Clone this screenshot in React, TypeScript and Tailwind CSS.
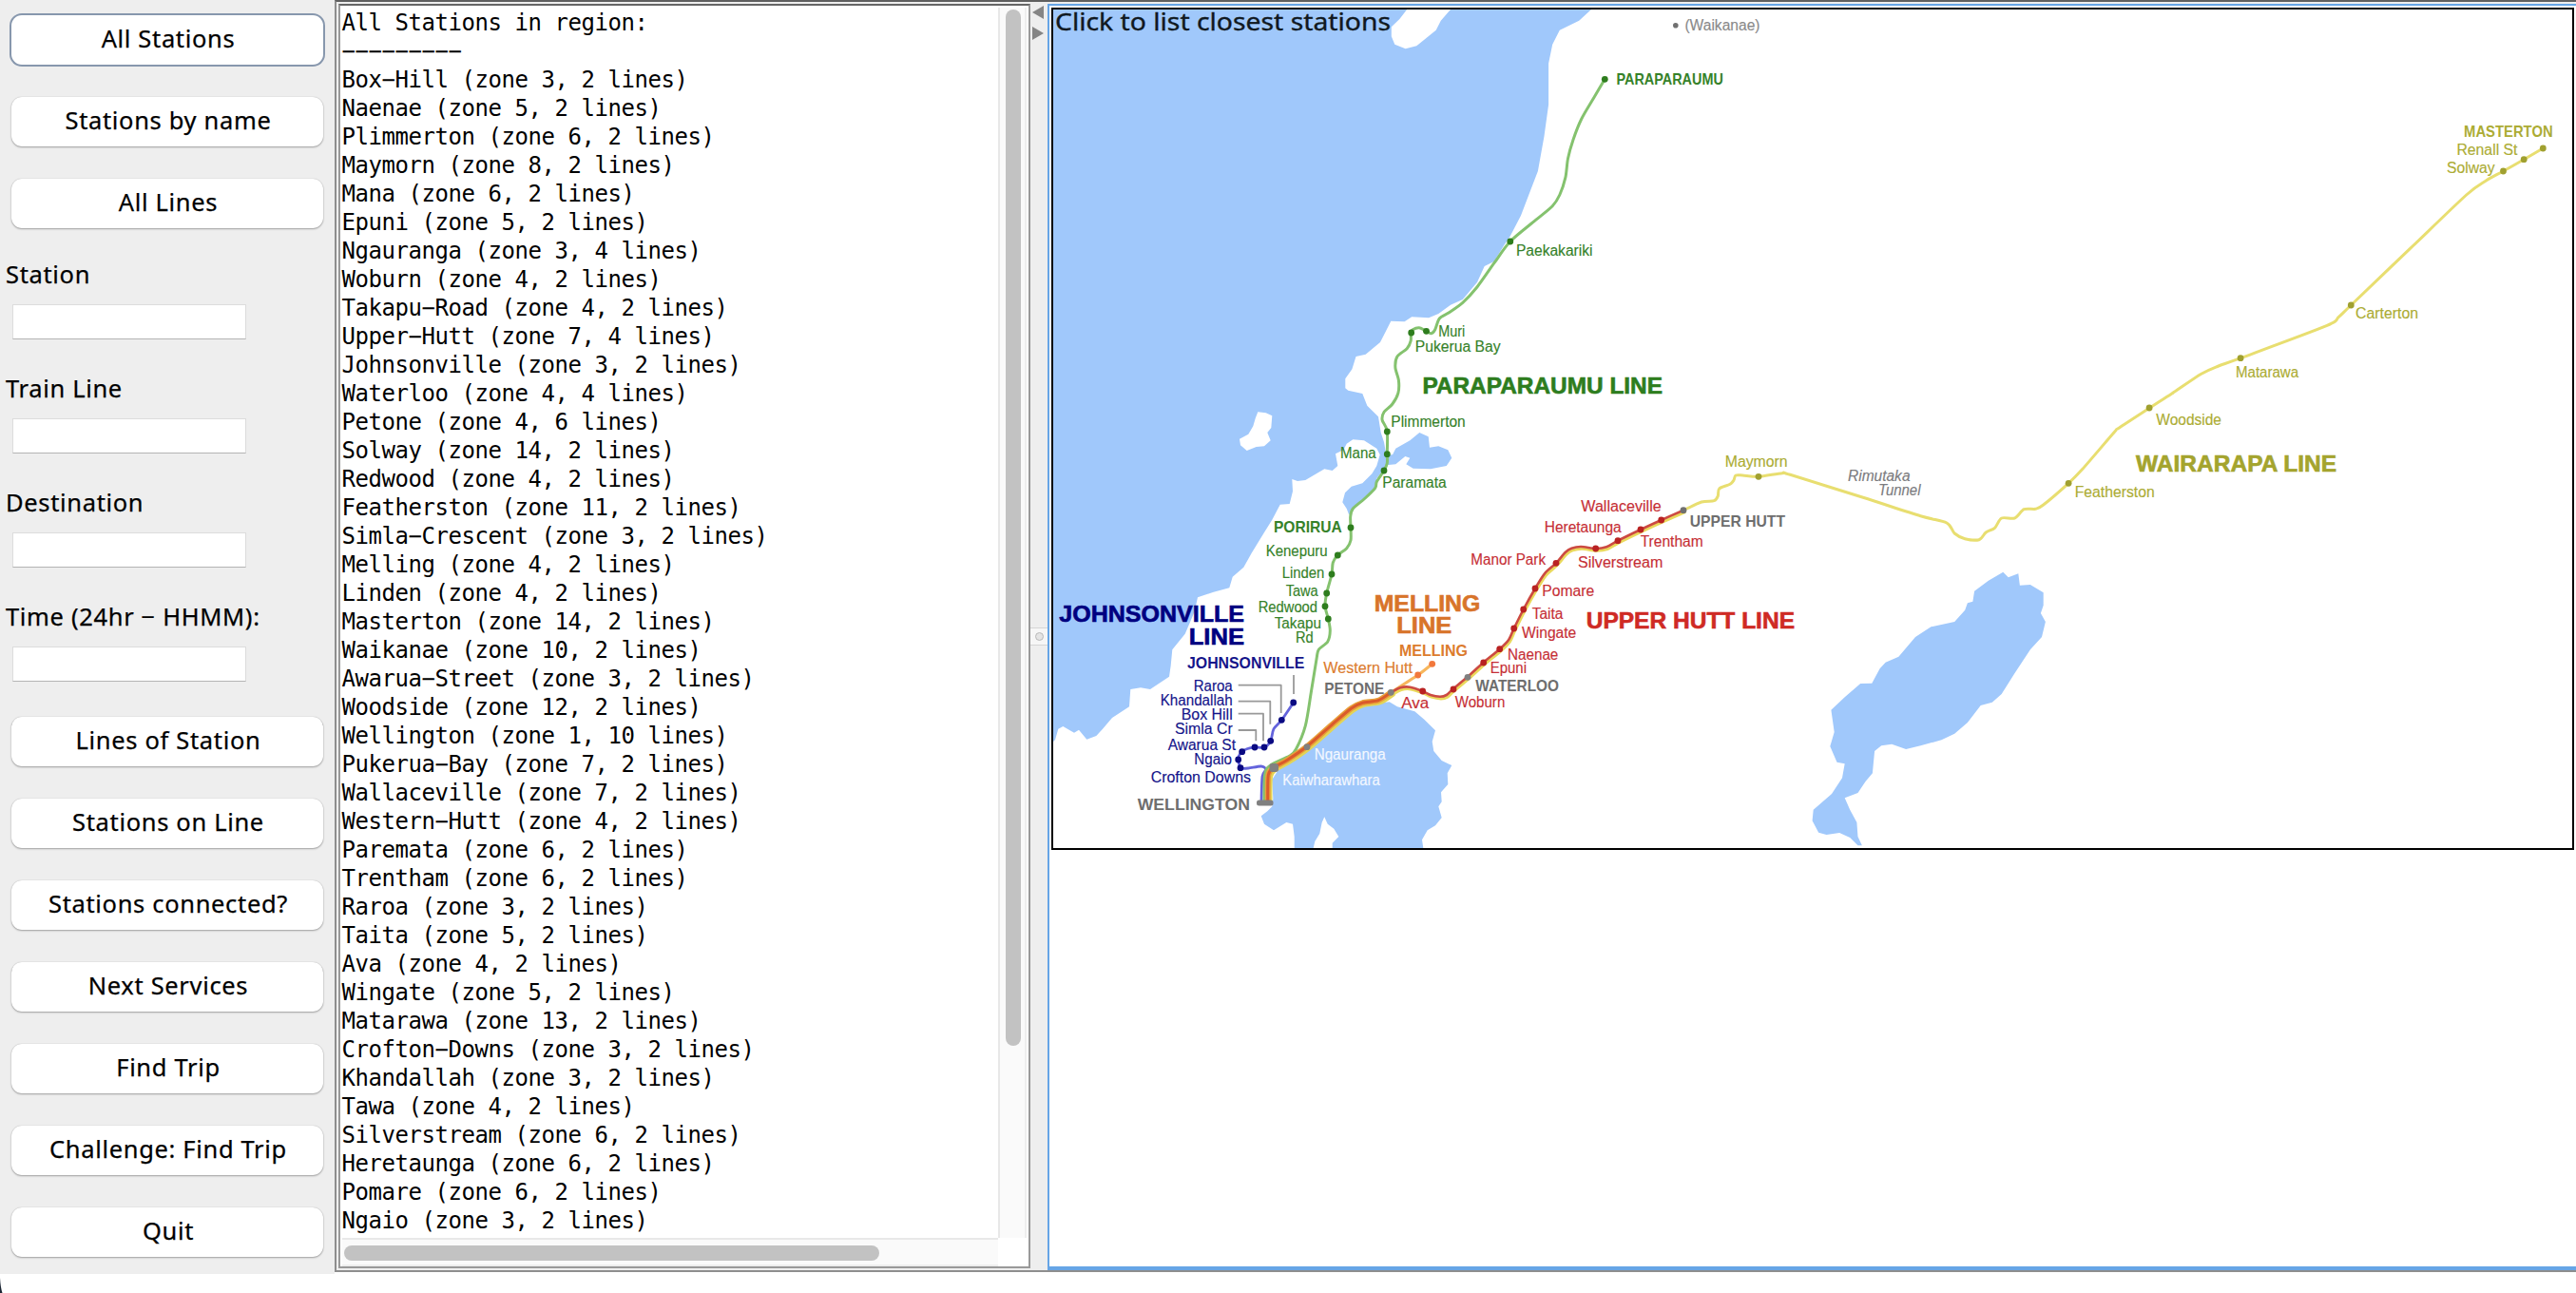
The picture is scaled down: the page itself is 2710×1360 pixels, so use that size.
import React from "react";

type Pt = [number, number];

/* The map is digitised from five sheets; each has an origin and a scale. */
const sheet = (ox: number, oy: number, sx: number, sy: number) => (x: number, y: number): Pt => [
  Math.round((ox + x / sx) * 10) / 10,
  Math.round((oy + y / sy) * 10) / 10,
];
const north = sheet(1100, 0, 1.96, 3);
const south = sheet(1100, 400, 3, 3);
const valley = sheet(1500, 450, 3, 3);
const plains = sheet(1900, 0, 1.936, 3);
const lake = sheet(1850, 450, 1.8186, 3);
type Sheet = typeof north;

const on = (s: Sheet, flat: number[]): Pt[] => {
  const out: Pt[] = [];
  for (let i = 0; i < flat.length; i += 2) out.push(s(flat[i], flat[i + 1]));
  return out;
};

const poly = (pts: Pt[]) => "M" + pts.map((p) => p.join(" ")).join("L") + "Z";

/* Catmull-Rom spline through the points. */
const curve = (p: Pt[]) => {
  let d = `M${p[0][0]} ${p[0][1]}`;
  for (let i = 0; i < p.length - 1; i++) {
    const a = p[i - 1] || p[i];
    const b = p[i];
    const c = p[i + 1];
    const e = p[i + 2] || c;
    d += `C${b[0] + (c[0] - a[0]) / 7} ${b[1] + (c[1] - a[1]) / 7} ${c[0] - (e[0] - b[0]) / 7} ${c[1] - (e[1] - b[1]) / 7} ${c[0]} ${c[1]}`;
  }
  return d;
};

const sea: Pt[] = [
  [1108, 10],
  ...on(north, [1125, 30, 1100, 65, 1060, 95, 1045, 140, 1037, 200, 1037, 330, 1028, 430, 1015, 540, 1000, 600, 980, 680, 958, 745, 945, 775, 925, 825, 905, 840, 890, 890, 860, 945, 835, 962, 810, 990, 790, 1003, 755, 1000, 740, 1015, 712, 1013, 700, 1050, 690, 1080, 660, 1118, 640, 1125, 632, 1165, 618, 1195, 618, 1225]),
  ...on(south, [955, 32, 1000, 42, 1015, 80, 1050, 115, 1058, 165, 1068, 195, 1075, 235, 1095, 235, 1105, 215, 1150, 190, 1180, 165, 1208, 178, 1212, 212, 1240, 208, 1270, 220, 1282, 245, 1265, 270, 1215, 280, 1160, 278, 1138, 265, 1150, 245, 1135, 240, 1105, 265, 1075, 268, 1060, 290, 1045, 310, 1040, 345, 1000, 380, 965, 410, 958, 425, 950, 405, 937, 385, 945, 355, 965, 335, 1000, 325, 1030, 295, 1045, 270, 1055, 235, 1045, 215, 1005, 190, 970, 187, 950, 200, 940, 220, 915, 232, 922, 270, 905, 285, 880, 280, 820, 315, 795, 318, 778, 312, 780, 350, 770, 390, 740, 392, 715, 440, 690, 480, 650, 545, 625, 590, 590, 620, 580, 655, 530, 668, 480, 685, 470, 730, 440, 800, 400, 850, 395, 900, 390, 935, 330, 975, 300, 970, 268, 975, 264, 1030, 210, 1065, 180, 1100, 160, 1122, 130, 1133, 105, 1103, 90, 1112, 55, 1092, 40, 1100, 30, 1135, 24, 1140]),
];
const kapiti = on(north, [745, 30, 730, 60, 713, 85, 713, 115, 720, 140, 742, 154, 765, 145, 785, 120, 805, 95, 815, 65, 835, 30]);
const manaIsland = on(south, [670, 100, 695, 103, 715, 112, 712, 150, 700, 165, 710, 190, 690, 208, 665, 210, 635, 222, 615, 205, 612, 185, 640, 170, 655, 145, 662, 120]);
const harbour = on(south, [1085, 1015, 1110, 1030, 1165, 1045, 1195, 1070, 1230, 1105, 1220, 1140, 1225, 1170, 1250, 1200, 1282, 1215, 1268, 1240, 1270, 1275, 1248, 1300, 1250, 1330, 1240, 1345, 1250, 1380, 1230, 1405, 1205, 1420, 1188, 1450, 1192, 1476, 905, 1476, 905, 1460, 925, 1440, 910, 1415, 890, 1400, 880, 1378, 872, 1395, 865, 1430, 850, 1455, 845, 1476, 785, 1476, 785, 1440, 780, 1400, 760, 1395, 720, 1420, 690, 1400, 680, 1375, 700, 1360, 715, 1345, 718, 1320, 715, 1260, 740, 1220, 830, 1155, 970, 1035, 1040, 1020]);
const lakeWairarapa = on(lake, [468, 455, 478, 472, 497, 460, 500, 497, 520, 495, 545, 520, 545, 560, 540, 585, 549, 612, 542, 660, 520, 700, 490, 775, 465, 840, 447, 866, 425, 876, 400, 930, 375, 965, 350, 985, 310, 1003, 282, 1014, 255, 998, 235, 1003, 222, 1020, 218, 1090, 205, 1115, 190, 1152, 165, 1168, 175, 1205, 188, 1245, 190, 1290, 198, 1318, 190, 1318, 175, 1293, 155, 1278, 130, 1284, 115, 1277, 103, 1240, 105, 1205, 140, 1155, 160, 1105, 165, 1060, 150, 1055, 137, 1005, 145, 960, 139, 890, 165, 850, 195, 807, 217, 806, 232, 760, 243, 740, 268, 722, 300, 660, 330, 628, 375, 612, 395, 575, 400, 553, 410, 548, 413, 515, 440, 482]);

const paraparaumuLine = [
  ...on(north, [1153, 250, 1130, 310, 1105, 375, 1088, 440, 1077, 500, 1072, 560, 1060, 615, 1045, 650, 1010, 695, 958, 762, 925, 830, 890, 905, 860, 955, 830, 988, 812, 1005, 803, 1040, 795, 1052, 783, 1043, 770, 1034, 757, 1040, 753, 1050, 753, 1075, 745, 1100, 725, 1125, 721, 1160, 728, 1200, 727, 1240, 715, 1275, 698, 1300, 694, 1325]),
  ...on(south, [1078, 160, 1078, 232, 1078, 262, 1068, 285, 1045, 320, 1040, 340, 1005, 375, 970, 405, 962, 430, 963, 465, 963, 505, 950, 530, 922, 552, 907, 575, 903, 612, 887, 672, 882, 713, 892, 752, 898, 790, 890, 825, 862, 850, 855, 880, 838, 985, 820, 1090, 790, 1165, 770, 1185, 720, 1208, 698, 1225, 691, 1250, 690, 1325]),
];
const trunkLine = on(south, [701, 1325, 703, 1245, 720, 1222, 760, 1200, 825, 1155, 900, 1090, 965, 1035, 1000, 1018, 1050, 1010, 1090, 985]);
const huttLine = [
  ...on(south, [1090, 985, 1120, 970, 1150, 968, 1188, 980, 1215, 993, 1245, 998, 1265, 993]),
  ...on(valley, [85, 825, 132, 785, 182, 740, 233, 698, 262, 668, 278, 633, 308, 573, 345, 507, 375, 460, 411, 427, 440, 393, 460, 380, 490, 375, 536, 381, 570, 376, 606, 356, 678, 321, 743, 291, 813, 260]),
];
const mellingLine = on(south, [1090, 985, 1175, 930, 1220, 895]);
const wairarapaLine = [
  ...on(valley, [813, 260, 870, 234, 910, 230, 922, 215, 926, 192, 960, 178, 972, 165, 978, 150, 1000, 150, 1050, 154, 1125, 143, 1150, 148]),
  ...on(lake, [200, 220, 310, 278, 360, 300, 375, 333, 395, 350, 422, 353, 435, 330, 452, 316, 465, 285, 490, 285, 508, 257, 530, 256, 545, 243, 593, 175, 620, 130, 680, 15]),
  ...on(plains, [638, 1350, 700, 1287, 745, 1242, 805, 1180, 840, 1155, 885, 1130, 1060, 1028, 1085, 1000, 1110, 963, 1230, 785, 1345, 615, 1385, 570, 1420, 540, 1462, 503, 1501, 468]),
];
const johnsonvilleLine = on(south, [782, 1017, 745, 1072, 720, 1100, 710, 1138, 690, 1158, 660, 1158, 635, 1163, 620, 1172, 610, 1185, 608, 1197, 612, 1215, 617, 1224, 640, 1224, 680, 1218, 695, 1228, 684, 1250, 681, 1325]);
const leaders = [
  [783, 930, 783, 990],
  [608, 962, 743, 962, 743, 1050],
  [608, 1013, 709, 1013, 709, 1085],
  [608, 1052, 687, 1052, 687, 1138],
  [608, 1104, 664, 1104, 664, 1138],
].map((l) => on(south, l));

const GREEN = "#36822a";
const NAVY = "#14148a";
const RED = "#c62f36";
const ORANGE = "#dc7c2e";
const OLIVE = "#acac34";
const GRAY = "#6e6e6e";

const dots: [string, Pt[]][] = [
  ["#707070", on(north, [1299, 80])],
  ["#2e7d1e", on(north, [1153, 250, 958, 762, 785, 1045, 754, 1050])],
  ["#2e7d1e", on(south, [1078, 162, 1078, 233, 1068, 285, 963, 465, 922, 552, 903, 612, 887, 672, 882, 713, 892, 753])],
  ["#0a0a82", on(south, [782, 1017, 745, 1072, 710, 1138, 690, 1158, 660, 1158, 620, 1172, 608, 1197, 615, 1223])],
  ["#f2783c", on(south, [1175, 930, 1220, 895])],
  ["#b92222", on(south, [1190, 981, 1287, 975])],
  ["#b92222", on(valley, [182, 741, 233, 698, 278, 633, 308, 573, 345, 507, 411, 427, 536, 381, 606, 356, 678, 321, 743, 291])],
  ["#808080", on(south, [825, 1157, 1090, 985, 1332, 937])],
  ["#707070", on(valley, [813, 260])],
  ["#a0a030", on(valley, [1050, 154])],
  ["#a0a030", on(lake, [593, 175])],
  ["#a0a030", on(plains, [699, 1287, 885, 1130, 1110, 963, 1420, 540, 1462, 503, 1501, 468])],
];

type Kind = "station" | "major" | "line" | "note";
const labels: [Sheet, string, number, number, number, string, Kind][] = [
  [north, "(Waikanae)", 1318, 1473, 95, "#8a8a8a", "station"],
  [north, "PARAPARAUMU", 1177, 1397, 267, GREEN, "major"],
  [north, "Paekakariki", 970, 1128, 806, GREEN, "station"],
  [north, "Muri", 810, 865, 1063, GREEN, "station"],
  [north, "Pukerua Bay", 762, 938, 1110, GREEN, "station"],
  [north, "PARAPARAUMU LINE", 777, 1272, 1241, "#2e7d1e", "line"],
  [south, "Plimmerton", 1090, 1325, 147, GREEN, "station"],
  [south, "Mana", 930, 1043, 247, GREEN, "station"],
  [south, "Paramata", 1063, 1265, 340, GREEN, "station"],
  [south, "PORIRUA", 720, 935, 480, GREEN, "major"],
  [south, "Kenepuru", 695, 890, 556, GREEN, "station"],
  [south, "Linden", 746, 880, 623, GREEN, "station"],
  [south, "Tawa", 758, 860, 682, GREEN, "station"],
  [south, "Redwood", 671, 858, 732, GREEN, "station"],
  [south, "Takapu", 722, 870, 784, GREEN, "station"],
  [south, "Rd", 789, 845, 828, GREEN, "station"],
  [south, "JOHNSONVILLE", 43, 627, 763, "#000080", "line"],
  [south, "LINE", 452, 627, 834, "#000080", "line"],
  [south, "JOHNSONVILLE", 447, 817, 910, NAVY, "major"],
  [south, "Raroa", 467, 590, 980, NAVY, "station"],
  [south, "Khandallah", 362, 590, 1026, NAVY, "station"],
  [south, "Box Hill", 428, 590, 1071, NAVY, "station"],
  [south, "Simla Cr", 408, 590, 1117, NAVY, "station"],
  [south, "Awarua St", 386, 600, 1166, NAVY, "station"],
  [south, "Ngaio", 469, 588, 1212, NAVY, "station"],
  [south, "Crofton Downs", 332, 648, 1268, NAVY, "station"],
  [south, "WELLINGTON", 290, 645, 1355, GRAY, "major"],
  [south, "Ngauranga", 848, 1073, 1198, "#f4f8ff", "station"],
  [south, "Kaiwharawhara", 748, 1055, 1278, "#f4f8ff", "station"],
  [south, "PETONE", 880, 1069, 990, GRAY, "major"],
  [south, "Western Hutt", 877, 1158, 925, ORANGE, "station"],
  [south, "MELLING", 1116, 1332, 870, ORANGE, "major"],
  [south, "MELLING", 1037, 1372, 728, "#d8742a", "line"],
  [south, "LINE", 1108, 1282, 798, "#d8742a", "line"],
  [south, "Ava", 1123, 1210, 1036, RED, "station"],
  [south, "Woburn", 1292, 1450, 1032, RED, "station"],
  [valley, "WATERLOO", 157, 420, 831, GRAY, "major"],
  [valley, "Epuni", 203, 318, 774, RED, "station"],
  [valley, "Naenae", 258, 418, 731, RED, "station"],
  [valley, "Wingate", 303, 475, 663, RED, "station"],
  [valley, "Taita", 335, 433, 603, RED, "station"],
  [valley, "Pomare", 367, 532, 532, RED, "station"],
  [valley, "Manor Park", 142, 378, 431, RED, "station"],
  [valley, "Silverstream", 480, 748, 442, RED, "station"],
  [valley, "Trentham", 677, 875, 376, RED, "station"],
  [valley, "Heretaunga", 374, 617, 331, RED, "station"],
  [valley, "Wallaceville", 490, 743, 263, RED, "station"],
  [valley, "UPPER HUTT", 833, 1134, 311, GRAY, "major"],
  [valley, "Maymorn", 944, 1142, 123, OLIVE, "station"],
  [valley, "UPPER HUTT LINE", 506, 1164, 634, "#cf2a24", "line"],
  [lake, "Rimutaka", 171, 290, 168, "#7c7c80", "note"],
  [lake, "Tunnel", 229, 310, 214, "#7c7c80", "note"],
  [lake, "Featherston", 605, 758, 219, OLIVE, "station"],
  [lake, "WAIRARAPA LINE", 722, 1106, 137, "#a4a42e", "line"],
  [plains, "Woodside", 713, 846, 1342, OLIVE, "station"],
  [plains, "Matarawa", 875, 1003, 1191, OLIVE, "station"],
  [plains, "Carterton", 1119, 1247, 1004, OLIVE, "station"],
  [plains, "Solway", 1305, 1403, 545, OLIVE, "station"],
  [plains, "Renall St", 1325, 1449, 488, OLIVE, "station"],
  [plains, "MASTERTON", 1340, 1521, 432, OLIVE, "major"],
];
const kindClass: Record<Kind, string> = {
  station: "text-[16px]",
  major: "text-[16.5px] font-bold",
  line: "text-[23.3px] font-bold",
  note: "text-[16px] italic",
};

function RailMap() {
  const water = "#a0c8fb";
  return (
    <svg className="block h-full w-full overflow-visible" viewBox="1108 10 1598 882" preserveAspectRatio="none">
      <path d={poly(sea)} fill={water} />
      <path d={poly(kapiti)} fill="#fff" />
      <path d={poly(manaIsland)} fill="#fff" />
      <path d={poly(harbour)} fill={water} />
      <path d={poly(lakeWairarapa)} fill={water} />
      <g fill="none" strokeLinecap="round" strokeLinejoin="round">
        <path d={curve(johnsonvilleLine)} stroke="#6464dc" strokeWidth="2.8" />
        <path d={curve(trunkLine)} stroke="#e3d455" strokeWidth="6.4" transform="translate(1.6 1.4)" />
        <path d={curve(paraparaumuLine)} stroke="#84c26e" strokeWidth="3" />
        <path d={curve(huttLine)} stroke="#ead95c" strokeWidth="3.4" transform="translate(1 2)" />
        <path d={curve(wairarapaLine)} stroke="#e8de70" strokeWidth="3" />
        <path d={curve(mellingLine)} stroke="#f7b65c" strokeWidth="3" />
        <path d={curve(trunkLine)} stroke="#e8a03a" strokeWidth="6" />
        <path d={curve(trunkLine)} stroke="#da5a2c" strokeWidth="3" />
        <path d={curve(huttLine)} stroke="#cc4a42" strokeWidth="2.6" />
        {leaders.map((l, i) => (
          <polyline key={i} points={l.join(" ")} stroke="#999" strokeWidth="1.8" strokeLinecap="butt" />
        ))}
      </g>
      {dots.map(([fill, pts], i) =>
        pts.map(([x, y], j) => <circle key={`${i}-${j}`} cx={x} cy={y} r={i === 0 ? 2.8 : 3.4} fill={fill} />),
      )}
      <rect x="1335.5" y="803" width="9.5" height="9" rx="3" fill="#808080" />
      <rect x="1322" y="841.5" width="17.5" height="6" rx="2.5" fill="#808080" />
      <g style={{ fontFamily: '"Liberation Sans", Arial, sans-serif' }}>
        {labels.map(([s, text, x0, x1, base, fill, kind], i) => {
          const [x, y] = s(x0, base);
          return (
            <text
              key={i}
              x={x}
              y={y}
              fill={fill}
              stroke={fill}
              strokeWidth={kind === "line" ? 0.6 : kind === "major" ? 0 : 0.15}
              className={kindClass[kind]}
              textLength={s(x1, base)[0] - x}
              lengthAdjust="spacingAndGlyphs"
            >
              {text}
            </text>
          );
        })}
      </g>
      <text
        x="1110"
        y="32"
        textLength="353"
        lengthAdjust="spacingAndGlyphs"
        className="text-[25.5px]"
        fill="#101820"
        stroke="#101820"
        strokeWidth="0.35"
        style={{ fontFamily: '"Noto Sans", sans-serif' }}
      >
        Click to list closest stations
      </text>
    </svg>
  );
}

const stations = `Box-Hill 3 2|Naenae 5 2|Plimmerton 6 2|Maymorn 8 2|Mana 6 2|Epuni 5 2|Ngauranga 3 4|Woburn 4 2|Takapu-Road 4 2|Upper-Hutt 7 4|Johnsonville 3 2|Waterloo 4 4|Petone 4 6|Solway 14 2|Redwood 4 2|Featherston 11 2|Simla-Crescent 3 2|Melling 4 2|Linden 4 2|Masterton 14 2|Waikanae 10 2|Awarua-Street 3 2|Woodside 12 2|Wellington 1 10|Pukerua-Bay 7 2|Wallaceville 7 2|Western-Hutt 4 2|Paremata 6 2|Trentham 6 2|Raroa 3 2|Taita 5 2|Ava 4 2|Wingate 5 2|Matarawa 13 2|Crofton-Downs 3 2|Khandallah 3 2|Tawa 4 2|Silverstream 6 2|Heretaunga 6 2|Pomare 6 2|Ngaio 3 2`
  .split("|")
  .map((row) => {
    const [name, zone, lines] = row.split(" ");
    return `${name} (zone ${zone}, ${lines} lines)`;
  });
const listing = ["All Stations in region:", "---------", ...stations].map((l) => l.replace(/-/g, "\u2212"));

function Button({ children, focused = false }: { children: React.ReactNode; focused?: boolean }) {
  return (
    <button
      className={
        "flex h-[52px] w-[328px] shrink-0 items-center justify-center rounded-[11px] bg-white pb-1 pl-[2px] " +
        (focused ? "shadow-[0_0_0_2px_#8797ad]" : "shadow-[0_1px_2px_rgba(0,0,0,0.32),0_0_1px_rgba(0,0,0,0.25)]")
      }
    >
      {children}
    </button>
  );
}

function Field({ label }: { label: string }) {
  return (
    <label className="flex h-[120px] shrink-0 flex-col gap-[10px]">
      <span className="-ml-[6px] h-[40px] leading-[36px]">{label}</span>
      <input className="ml-px h-[37px] w-[246px] border border-[#dcdcdc] border-b-[#b4b4b4] bg-white" />
    </label>
  );
}

export default function App() {
  return (
    <div className="flex h-[1360px] w-[2710px] flex-col overflow-hidden bg-white text-black">
      <div className="flex h-[1340px] shrink-0">
        <aside className='flex w-[352px] shrink-0 flex-col bg-[#eeeeee] pt-4 pl-3 font-["Noto_Sans",sans-serif] text-[25.5px] tracking-[0.66px] [-webkit-text-stroke:0.25px_black]'>
          <div className="mb-[30px] flex flex-col gap-[34px]">
            <Button focused>All Stations</Button>
            <Button>Stations by name</Button>
            <Button>All Lines</Button>
          </div>
          <Field label="Station" />
          <Field label="Train Line" />
          <Field label="Destination" />
          <Field label={"Time (24hr \u2212 HHMM):"} />
          <div className="mt-1 flex flex-col gap-[34px]">
            <Button>Lines of Station</Button>
            <Button>Stations on Line</Button>
            <Button>Stations connected?</Button>
            <Button>Next Services</Button>
            <Button>Find Trip</Button>
            <Button>Challenge: Find Trip</Button>
            <Button>Quit</Button>
          </div>
        </aside>

        <main className="flex h-[1338px] min-w-0 flex-1 border-t-2 border-b-2 border-l-2 border-t-[#5f5f5f] border-b-[#8e8e8e] border-l-[#8e8e8e] bg-[#eeeeee]">
          <section className="mt-[2px] mb-[2px] ml-[2px] flex w-[728px] shrink-0 flex-col border-2 border-[#999999] border-t-[#666666] bg-white">
            <div className="flex h-[1296px] shrink-0">
              <pre className='w-[692px] overflow-hidden pt-[3px] pl-[1.5px] font-["DejaVu_Sans_Mono",monospace] text-[24px] leading-[30px] tracking-[-0.449px]'>
                {listing.join("\n")}
              </pre>
              <div className="mt-[2px] flex w-[30px] flex-col border-r-2 border-l-2 border-r-[#eeeeee] border-l-[#e8e8e8] bg-[#fafafa] pt-[2px] pl-[6px]">
                <div className="h-[1090px] w-4 rounded-full bg-[#c2c2c2]" />
              </div>
            </div>
            <div className="ml-[2px] flex h-[30px] w-[690px] items-start border-t-2 border-b-2 border-t-[#e8e8e8] border-b-[#eeeeee] bg-[#fafafa] pt-[6px] pl-[2px]">
              <div className="h-4 w-[563px] rounded-full bg-[#c2c2c2]" />
            </div>
          </section>

          <div className="flex w-[18px] shrink-0 flex-col items-start gap-2 pt-1 pl-[2px]">
            <svg className="block h-[14px] w-[12px]" viewBox="0 0 12 14">
              <path d="M12 0V14L0 7Z" fill="#858585" />
            </svg>
            <svg className="block h-[14px] w-[12px]" viewBox="0 0 12 14">
              <path d="M0 0V14L12 7Z" fill="#858585" />
            </svg>
            <div className="mt-[610px] -ml-[2px] flex h-[19px] w-[18px] items-center justify-center border-t border-b border-[#d6d6d6] bg-[#f6f6f6]">
              <div className="h-[9px] w-[9px] rounded-full border border-[#b8b8b8] bg-[#e4e4e4]" />
            </div>
          </div>

          <section className="mt-[2px] min-w-0 flex-1 border-t-2 border-b-4 border-l-2 border-[#66a5e6] bg-white pt-[2px] pl-[2px]">
            <div className="h-[886px] w-[1602px] border-2 border-black">
              <RailMap />
            </div>
          </section>
        </main>
      </div>
      <svg className="mt-1 block h-4 w-[3px]" viewBox="0 0 3 16">
        <path d="M0 0Q.5 10 2.5 16H0Z" fill="#1c2634" />
      </svg>
    </div>
  );
}
